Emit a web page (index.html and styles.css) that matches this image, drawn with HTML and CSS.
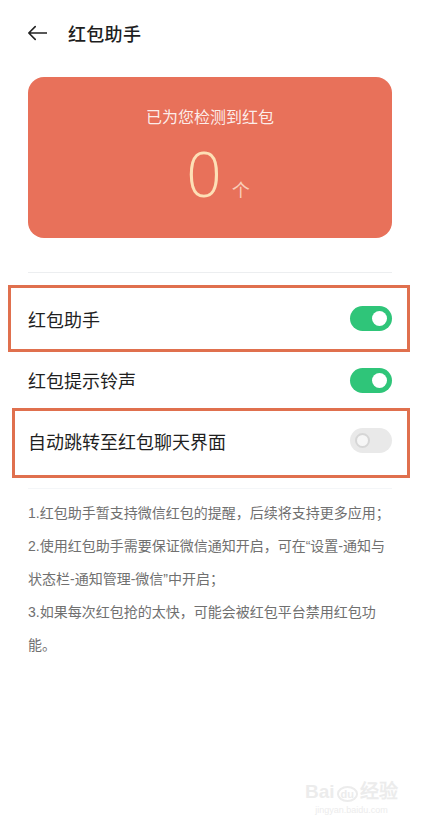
FILE: index.html
```html
<!DOCTYPE html>
<html lang="zh-CN">
<head>
<meta charset="utf-8">
<title>红包助手</title>
<link rel="stylesheet" href="styles.css">
</head>
<body>
<div class="page">
  <header class="header">
    <svg class="back" width="20" height="16" viewBox="0 0 20 16"><path d="M19.5 8H1.8M8.2 1.6L1.8 8l6.4 6.4" fill="none" stroke="#222" stroke-width="1.6" stroke-linecap="round" stroke-linejoin="round"/></svg>
    <h1 class="title">红包助手</h1>
  </header>

  <section class="card">
    <div class="card-sub">已为您检测到红包</div>
    <div class="card-count"><span class="num">0</span><span class="unit">个</span></div>
  </section>

  <div class="divider"></div>

  <div class="rows">
    <div class="row row-mark1">
      <span class="label">红包助手</span>
      <span class="toggle on"><span class="knob"></span></span>
    </div>
    <div class="row row-plain">
      <span class="label">红包提示铃声</span>
      <span class="toggle on"><span class="knob"></span></span>
    </div>
    <div class="row row-mark2">
      <span class="label">自动跳转至红包聊天界面</span>
      <span class="toggle off"><span class="knob"></span></span>
    </div>
  </div>

  <div class="divider divider-faint"></div>

  <div class="notes">
    <p>1.红包助手暂支持微信红包的提醒，后续将支持更多应用；</p>
    <p>2.使用红包助手需要保证微信通知开启，可在“设置-通知与状态栏-通知管理-微信”中开启；</p>
    <p>3.如果每次红包抢的太快，可能会被红包平台禁用红包功能。</p>
  </div>

  <div class="watermark">
    <div class="wm-top">Bai<span class="wm-du">du</span>经验</div>
    <div class="wm-url">jingyan.baidu.com</div>
  </div>
</div>
</body>
</html>
```

FILE: styles.css
```css
* { box-sizing: border-box; }
html, body {
  margin: 0;
  padding: 0;
  background: #ffffff;
}
body {
  font-family: "Noto Sans CJK SC", "Noto Sans", sans-serif;
  color: #222;
}
.page {
  position: relative;
  width: 426px;
  height: 832px;
  overflow: hidden;
}
.header {
  height: 65px;
  display: flex;
  align-items: center;
  padding-left: 27px;
  gap: 21px;
}
.back { display: block; }
.title {
  margin: 0;
  font-size: 18px;
  font-weight: 500;
  color: #1e1e1e;
  letter-spacing: 0.3px;
}
.card {
  margin: 12px 34px 0 28px;
  height: 161px;
  border-radius: 16px;
  background: #e8715a;
  display: flex;
  flex-direction: column;
  align-items: center;
  padding-top: 26px;
}
.card-sub {
  font-size: 16px;
  line-height: 26px;
  color: rgba(255, 255, 255, 0.88);
}
.card-count {
  display: flex;
  align-items: baseline;
  margin-top: 4px;
  margin-left: 16px;
}
.num {
  font-family: "Open Sans", "Noto Sans", sans-serif;
  font-weight: 300;
  font-size: 62px;
  line-height: 80px;
  color: #fde0b6;
}
.unit {
  font-size: 18px;
  color: #f9cdb8;
  margin-left: 10px;
}
.divider {
  margin: 34px 34px 0 28px;
  height: 1px;
  background: #eceef0;
}
.rows {
  display: flex;
  flex-direction: column;
  margin-top: 12px;
}
.row {
  display: flex;
  align-items: center;
  justify-content: space-between;
}
.label {
  font-size: 18px;
  color: #1f1f1f;
}
.row-mark1 {
  margin-left: 8px;
  width: 402px;
  height: 67px;
  border: 3px solid #e0704e;
  padding: 0 15px 0 17px;
}
.row-plain {
  height: 56px;
  padding: 0 34px 0 28px;
}
.row-mark2 {
  margin-left: 12px;
  width: 398px;
  height: 70px;
  border: 3px solid #e0704e;
  padding: 0 15px 5px 13px;
}
.toggle {
  position: relative;
  width: 42px;
  height: 25px;
  border-radius: 13px;
  display: block;
}
.toggle.on { background: #2fc579; }
.toggle.off { background: #e9e9e9; }
.knob {
  position: absolute;
  top: 5px;
  width: 15px;
  height: 15px;
  border-radius: 50%;
}
.toggle.on .knob {
  right: 5px;
  background: #ffffff;
}
.toggle.off .knob {
  left: 5px;
  background: #f6f6f6;
  border: 2px solid #d6d6d6;
}
.divider-faint {
  margin-top: 10px;
  background: #f4f6f8;
}
.notes {
  padding: 8px 32px 0 28px;
  font-family: "Liberation Sans", "Noto Sans CJK SC", sans-serif;
  font-size: 14px;
  line-height: 33px;
  color: #707070;
}
.notes p { margin: 0; }
.watermark {
  position: absolute;
  right: 28px;
  bottom: 16px;
  color: #ececec;
  font-family: "Liberation Sans", sans-serif;
  text-align: center;
}
.wm-top {
  font-size: 19px;
  font-weight: 700;
  line-height: 22px;
}
.wm-du {
  font-size: 11px;
  border: 2px solid #ececec;
  border-radius: 50%;
  padding: 0 2px;
  margin: 0 2px;
}
.wm-url {
  font-size: 9px;
  line-height: 11px;
}
```
